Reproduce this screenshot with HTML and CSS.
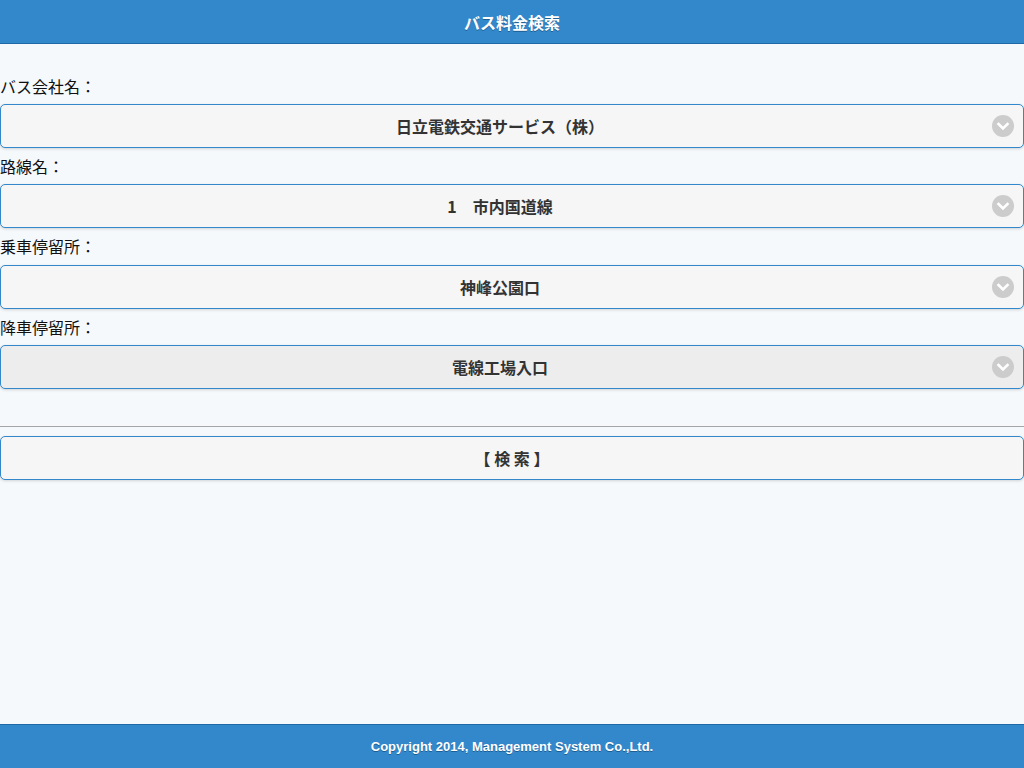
FILE: index.html
```html
<!DOCTYPE html>
<html lang="ja">
<head>
    <meta charset="UTF-8">
    <meta name="viewport" content="width=device-width, initial-scale=1.0">
    <title>バス料金検索</title>
    <link rel="stylesheet" href="styles.css">
</head>
<body>
    <div class="page">
        <header class="bar header">
            <h1>バス料金検索</h1>
        </header>

        <main class="content">
            <div class="field">
                <label for="company">バス会社名：</label>
                <div class="select-btn" id="company">
                    <span>日立電鉄交通サービス（株）</span>
                    <svg class="arrow" viewBox="0 0 22 22" width="22" height="22"><circle cx="11" cy="11" r="11" fill="#cccccc"/><path d="M6.5 9 L11 13.5 L15.5 9" fill="none" stroke="#ffffff" stroke-width="2.6" stroke-linecap="square"/></svg>
                </div>
            </div>

            <div class="field">
                <label for="route">路線名：</label>
                <div class="select-btn" id="route">
                    <span>1　市内国道線</span>
                    <svg class="arrow" viewBox="0 0 22 22" width="22" height="22"><circle cx="11" cy="11" r="11" fill="#cccccc"/><path d="M6.5 9 L11 13.5 L15.5 9" fill="none" stroke="#ffffff" stroke-width="2.6" stroke-linecap="square"/></svg>
                </div>
            </div>

            <div class="field">
                <label for="from" class="tall">乗車停留所：</label>
                <div class="select-btn" id="from">
                    <span>神峰公園口</span>
                    <svg class="arrow" viewBox="0 0 22 22" width="22" height="22"><circle cx="11" cy="11" r="11" fill="#cccccc"/><path d="M6.5 9 L11 13.5 L15.5 9" fill="none" stroke="#ffffff" stroke-width="2.6" stroke-linecap="square"/></svg>
                </div>
            </div>

            <div class="field">
                <label for="to">降車停留所：</label>
                <div class="select-btn active" id="to">
                    <span>電線工場入口</span>
                    <svg class="arrow" viewBox="0 0 22 22" width="22" height="22"><circle cx="11" cy="11" r="11" fill="#cccccc"/><path d="M6.5 9 L11 13.5 L15.5 9" fill="none" stroke="#ffffff" stroke-width="2.6" stroke-linecap="square"/></svg>
                </div>
            </div>

            <hr>

            <button type="button" class="search-btn">【 検 索 】</button>
        </main>

        <footer class="bar footer">
            <p>Copyright 2014, Management System Co.,Ltd.</p>
        </footer>
    </div>
</body>
</html>
```

FILE: styles.css
```css
body {
    margin: 0;
    padding: 0;
    font-family: "Liberation Sans", "Noto Sans CJK JP", sans-serif;
    background-color: #f5f9fc;
    color: #111111;
}
.page {
    display: flex;
    flex-direction: column;
    height: 768px;
}
.bar {
    background-color: #3388cc;
    color: #ffffff;
    text-shadow: 0 1px 0 #1a5e94;
    text-align: center;
    font-weight: bold;
}
.header {
    height: 43px;
    border-bottom: 1px solid #1f6aa6;
    display: flex;
    align-items: center;
    justify-content: center;
}
.header h1 {
    margin: 0;
    font-size: 16px;
    font-family: "Noto Sans CJK JP", sans-serif;
}
.content {
    flex: 1;
    padding-top: 24px;
}
.field label {
    display: block;
    height: 36px;
    line-height: 36px;
    font-size: 16px;
    font-family: "Noto Sans CJK JP", sans-serif;
}
.field label.tall {
    height: 37px;
}
.select-btn,
.search-btn {
    position: relative;
    box-sizing: border-box;
    height: 44px;
    border: 1px solid #3388cc;
    border-radius: 5px;
    background-color: #f6f6f6;
    box-shadow: 0 1px 3px rgba(0, 0, 0, 0.15);
    display: flex;
    align-items: center;
    justify-content: center;
    font-size: 16px;
    font-weight: bold;
    color: #333333;
    text-shadow: 0 1px 0 #f3f3f3;
    font-family: "Noto Sans CJK JP", sans-serif;
}
.select-btn {
    padding: 0 40px 0 16px;
}
.select-btn.active {
    background-color: #ededed;
}
.arrow {
    position: absolute;
    right: 9px;
    top: 10px;
}
hr {
    margin: 37px 0 9px;
    border: none;
    border-top: 1px solid #a6a6a6;
    height: 0;
}
.search-btn {
    width: 100%;
    cursor: pointer;
}
.footer {
    height: 43px;
    border-top: 1px solid #1f6aa6;
    display: flex;
    align-items: center;
    justify-content: center;
}
.footer p {
    margin: 0;
    font-size: 13px;
}
```
